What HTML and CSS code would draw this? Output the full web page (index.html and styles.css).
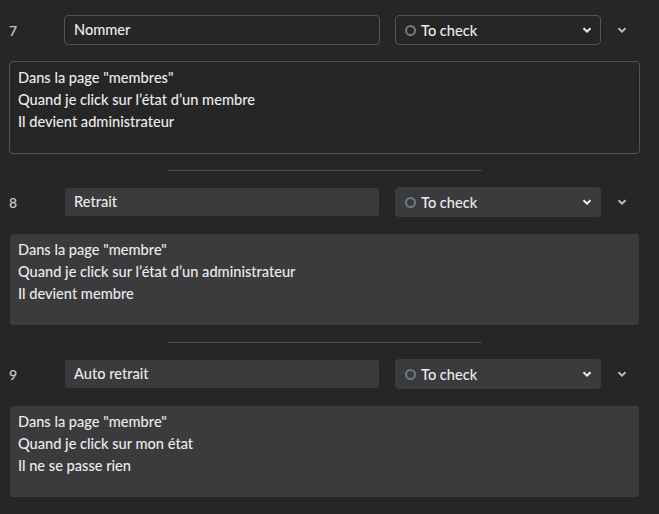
FILE: index.html
```html
<!DOCTYPE html>
<html lang="fr">
<head>
<meta charset="utf-8">
<link rel="stylesheet" href="styles.css">
</head>
<body>
<div class="list">
  <section class="item item-edit">
    <div class="row">
      <span class="num">7</span>
      <div class="field">Nommer</div>
      <div class="select"><span class="dot"></span><span class="label">To check</span>
        <svg class="chev" viewBox="0 0 10 6" width="10" height="6"><path d="M1.5 1.2 L5 4.6 L8.5 1.2" fill="none" stroke="currentColor" stroke-width="2"/></svg>
      </div>
      <svg class="chev outer" viewBox="0 0 10 6" width="10" height="6"><path d="M1.5 1.2 L5 4.6 L8.5 1.2" fill="none" stroke="currentColor" stroke-width="2"/></svg>
    </div>
    <div class="desc">Dans la page "membres"<br>Quand je click sur l’état d’un membre<br>Il devient administrateur</div>
  </section>
  <hr class="divider">
  <section class="item">
    <div class="row">
      <span class="num">8</span>
      <div class="field">Retrait</div>
      <div class="select"><span class="dot"></span><span class="label">To check</span>
        <svg class="chev" viewBox="0 0 10 6" width="10" height="6"><path d="M1.5 1.2 L5 4.6 L8.5 1.2" fill="none" stroke="currentColor" stroke-width="2"/></svg>
      </div>
      <svg class="chev outer" viewBox="0 0 10 6" width="10" height="6"><path d="M1.5 1.2 L5 4.6 L8.5 1.2" fill="none" stroke="currentColor" stroke-width="2"/></svg>
    </div>
    <div class="desc">Dans la page "membre"<br>Quand je click sur l’état d’un administrateur<br>Il devient membre</div>
  </section>
  <hr class="divider">
  <section class="item">
    <div class="row">
      <span class="num">9</span>
      <div class="field">Auto retrait</div>
      <div class="select"><span class="dot"></span><span class="label">To check</span>
        <svg class="chev" viewBox="0 0 10 6" width="10" height="6"><path d="M1.5 1.2 L5 4.6 L8.5 1.2" fill="none" stroke="currentColor" stroke-width="2"/></svg>
      </div>
      <svg class="chev outer" viewBox="0 0 10 6" width="10" height="6"><path d="M1.5 1.2 L5 4.6 L8.5 1.2" fill="none" stroke="currentColor" stroke-width="2"/></svg>
    </div>
    <div class="desc">Dans la page "membre"<br>Quand je click sur mon état<br>Il ne se passe rien</div>
  </section>
</div>
</body>
</html>
```
FILE: styles.css
```css
html, body {
  margin: 0;
  background: #262626;
}
body {
  font-family: "Lato", "Noto Sans", sans-serif;
  font-size: 14.6px;
  font-weight: 500;
  color: #ececec;
  padding: 15px 0 0 9px;
}
.list {
  width: 631px;
  display: flex;
  flex-direction: column;
}
.item {
  display: flex;
  flex-direction: column;
  gap: 16px;
}
.row {
  display: flex;
  align-items: center;
  height: 30px;
}
.num {
  width: 55px;
  color: #c4c4c4;
  font-size: 14px;
  font-weight: 600;
}
.field {
  box-sizing: border-box;
  width: 316px;
  height: 30px;
  line-height: 28px;
  padding: 0 9px;
  border: 1px solid transparent;
  border-radius: 4px;
  background: #3b3b3d;
  background-clip: padding-box;
}
.select {
  box-sizing: border-box;
  margin-left: 15px;
  width: 206px;
  height: 30px;
  display: flex;
  align-items: center;
  padding: 0 8px 0 9px;
  border: 1px solid #3b3b3d;
  border-radius: 4px;
  background: #3b3b3d;
}
.dot {
  box-sizing: border-box;
  width: 11px;
  height: 11px;
  border: 2px solid #6c7a89;
  border-radius: 50%;
  margin-right: 5px;
}
.label {
  flex: 1;
}
.chev {
  color: #f0f0f0;
  display: block;
}
.chev.outer {
  margin-left: 16px;
  color: #bdbdbd;
}
.desc {
  box-sizing: border-box;
  height: 93px;
  padding: 5px 8px;
  line-height: 22px;
  border: 1px solid transparent;
  border-radius: 4px;
  background: #3b3b3d;
  background-clip: padding-box;
}
.item-edit .field,
.item-edit .select,
.item-edit .desc {
  background: transparent;
  border-color: #535353;
}
.divider {
  width: 314px;
  margin: 16px auto;
  border: 0;
  border-top: 1px solid #4a4a4a;
}
```
